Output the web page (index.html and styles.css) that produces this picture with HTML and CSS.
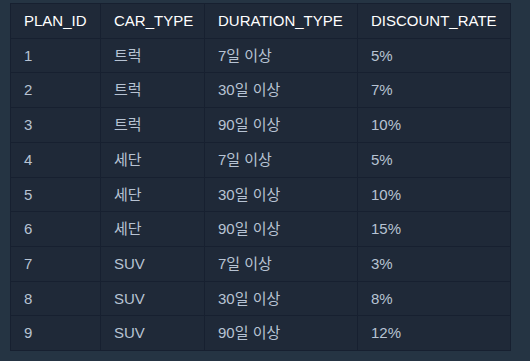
FILE: index.html
```html
<!DOCTYPE html>
<html lang="ko">
<head>
    <meta charset="UTF-8">
    <meta name="viewport" content="width=device-width, initial-scale=1.0">
    <title>CAR_RENTAL_COMPANY_DISCOUNT_PLAN</title>
    <link rel="stylesheet" href="styles.css">
</head>
<body>

<div class="result-wrap">
    <table class="result-table">
        <colgroup>
            <col class="col-id">
            <col class="col-type">
            <col class="col-duration">
            <col class="col-rate">
        </colgroup>
        <thead>
            <tr>
                <th>PLAN_ID</th>
                <th>CAR_TYPE</th>
                <th>DURATION_TYPE</th>
                <th>DISCOUNT_RATE</th>
            </tr>
        </thead>
        <tbody>
            <tr><td>1</td><td>트럭</td><td>7일 이상</td><td>5%</td></tr>
            <tr><td>2</td><td>트럭</td><td>30일 이상</td><td>7%</td></tr>
            <tr><td>3</td><td>트럭</td><td>90일 이상</td><td>10%</td></tr>
            <tr><td>4</td><td>세단</td><td>7일 이상</td><td>5%</td></tr>
            <tr><td>5</td><td>세단</td><td>30일 이상</td><td>10%</td></tr>
            <tr><td>6</td><td>세단</td><td>90일 이상</td><td>15%</td></tr>
            <tr><td>7</td><td>SUV</td><td>7일 이상</td><td>3%</td></tr>
            <tr><td>8</td><td>SUV</td><td>30일 이상</td><td>8%</td></tr>
            <tr><td>9</td><td>SUV</td><td>90일 이상</td><td>12%</td></tr>
        </tbody>
    </table>
</div>

</body>
</html>
```

FILE: styles.css
```css
* {
    padding: 0;
    margin: 0;
    box-sizing: border-box;
}

body {
    font-family: "Liberation Sans", "Noto Sans CJK KR", sans-serif;
    background-color: #253443;
    color: #b7c3d3;
}

.result-wrap {
    padding: 3px 10px;
}

.result-table {
    width: 500px;
    border-collapse: collapse;
    table-layout: fixed;
    background-color: #1f2938;
    font-size: 15px;
}

.col-id { width: 90px; }
.col-type { width: 104px; }
.col-duration { width: 153px; }
.col-rate { width: 153px; }

.result-table th,
.result-table td {
    padding: 7px 13px;
    line-height: 19.7px;
    border: 1px solid #172030;
    text-align: left;
    white-space: nowrap;
}

.result-table th {
    font-weight: normal;
    color: #ffffff;
}
```
